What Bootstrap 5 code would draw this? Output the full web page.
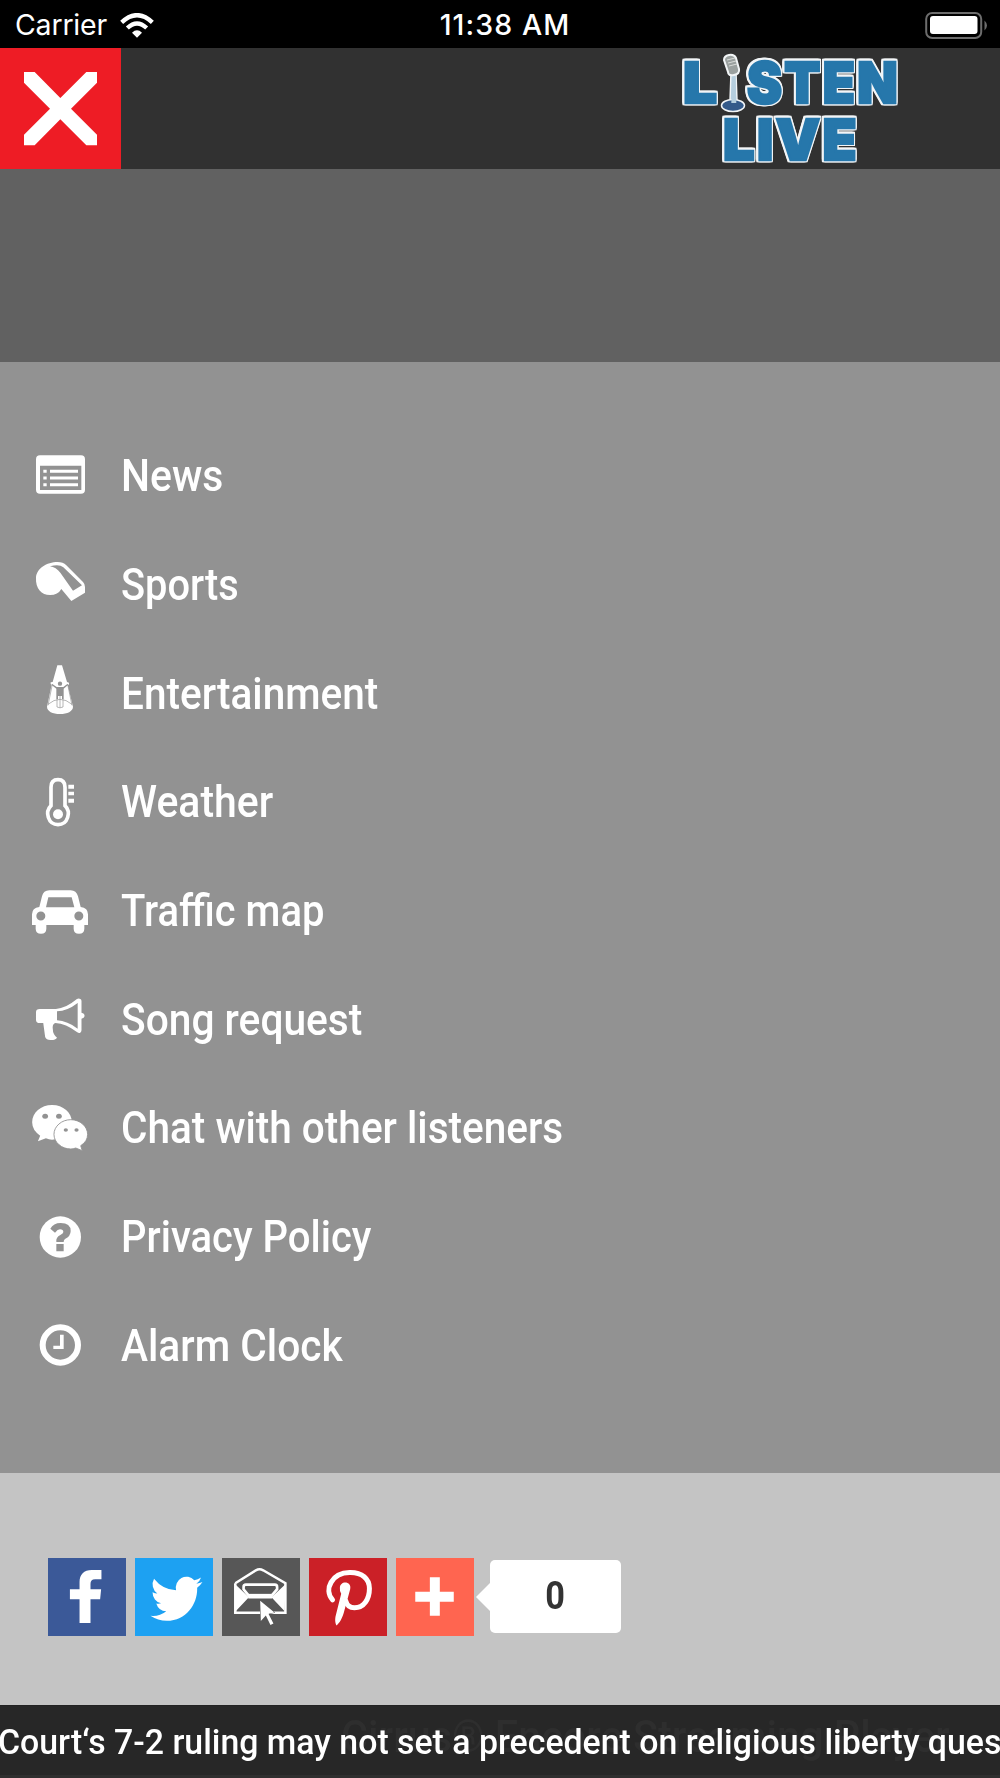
<!DOCTYPE html>
<html lang="en">
<head>
<meta charset="utf-8">
<meta name="viewport" content="width=device-width, initial-scale=1">
<title>Listen Live</title>
<link rel="stylesheet" href="https://cdn.jsdelivr.net/npm/bootstrap@5.3.0/dist/css/bootstrap.min.css">
<style>
html, body { height: 1778px; overflow: hidden; }
body { font-family: Roboto, "Liberation Sans", sans-serif; color: #fff; background: #c4c4c4; line-height: 1; }
svg { display: block; flex: none; }
.statusbar { height: 48px; background: #000; font-family: Inter, sans-serif; font-size: 28.5px; padding: 3px 13px 0 15px; display: grid; grid-template-columns: 1fr auto 1fr; }
.carrier { letter-spacing: -.2px; margin-right: -3px; }
.clock { font-weight: 500; letter-spacing: 1.1px; margin-left: 8px; }
.topbar { height: 121px; background: #313131; padding-right: 98px; }
.close-btn { width: 121px; height: 121px; background: #ee1c25; border: 0; padding: 0; }
.logo-word { filter: drop-shadow(1.3px 0 0 #f2f5f7) drop-shadow(-1.3px 0 0 #f2f5f7) drop-shadow(0 1.3px 0 #f2f5f7) drop-shadow(0 -1.3px 0 #f2f5f7); }
.band { height: 193px; background: #616161; }
.menu { height: 1111px; background: #929292; padding: 58.500px 0 74.500px 32px; }
.menu-row { height: 108.7px; color: #fff; text-decoration: none; gap: 33px; }
.menu-row svg { width: 56px; height: 56px; fill: #fff; }
.lbl { font-size: 44px; font-weight: 500; white-space: nowrap; transform-origin: 0 50%; transform: scaleX(.93); padding-top: 3px; }
.l2 { transform: scaleX(.904); }
.l3, .l7 { transform: scaleX(.921); }
.l5 { transform: scaleX(.909); }
.l6, .l9 { transform: scaleX(.925); }
.l8 { transform: scaleX(.91); }
.g { fill: #929292; }
.share { height: 232px; padding: 85px 0 0 48px; gap: 9.3px; }
.share svg { width: 77.7px; height: 77.7px; fill: #fff; }
.facebook { background: #3b5998; }
.twitter { background: #1da1f2; }
.mail { background: #575757; }
.pinterest { background: #cb2027; }
.more { background: #ff6550; }
.count { width: 131px; height: 73px; margin: 2px 0 0 7px; background: #fff; color: #333; border-radius: 5px; font-size: 39px; font-weight: 700; position: relative; }
.count span { transform: scaleX(.88); }
.count::before { content: ""; position: absolute; left: -14px; top: 22px; border: 15px solid transparent; border-right-color: #fff; border-left: 0; }
.ticker { height: 73px; background: #272727; border-top: 1px solid #222; border-bottom: 3px solid #2f2f2f; position: relative; overflow: hidden; white-space: nowrap; }
.station { position: absolute; left: 341px; top: 9px; font-size: 44px; font-weight: 500; color: #2e2e2e; transform-origin: 0 50%; transform: scaleX(.94); }
.headline { position: relative; left: -2px; padding-top: 4px; font-size: 35px; font-weight: 500; transform-origin: 0 50%; transform: scaleX(.967); }
</style>
</head>
<body>
<header>
  <div class="statusbar align-items-center">
    <div class="d-flex align-items-center gap-3">
      <span class="carrier">Carrier</span>
      <svg width="34" height="25" viewBox="362 35 102 75" fill="none" stroke="#fff"><path d="M367 63Q413 20 459 63M384 80Q413 53 442 80" stroke-width="13"/><path d="M398 94Q413 80 428 94L413 109Z" fill="#fff" stroke="none"/></svg>
    </div>
    <span class="clock">11:38 AM</span>
    <svg class="ms-auto" width="62" height="28" viewBox="925 11 62 28"><rect x="926.2" y="12" width="55" height="25" rx="6" fill="none" stroke="#6d6d6d" stroke-width="2"/><rect x="930" y="15" width="47.5" height="18" rx="3" fill="#fff"/><path d="M984.500 19.500q5 5 0 10z" fill="#6d6d6d"/></svg>
  </div>
  <div class="topbar d-flex justify-content-between">
    <button class="close-btn" type="button" aria-label="Close menu"><svg width="121" height="121" viewBox="0 144 363 363"><path fill="#fff" d="M72 216h32l77 78 78-78h32v32l-78 78 78 78v32h-32l-78-78-77 78H72v-32l78-78-78-78z"/></svg></button>
    <svg width="220" height="121" viewBox="682 48 220 121" font-family="Inter, sans-serif" font-weight="900" font-size="57" fill="#2677ab">
      <g class="logo-word" stroke="#2677ab" stroke-width="2.500">
        <text x="683" y="102.500" textLength="34" lengthAdjust="spacingAndGlyphs">L</text>
        <text x="747" y="102.500" textLength="153" letter-spacing="2.500" lengthAdjust="spacingAndGlyphs">STEN</text>
        <text x="723" y="160" textLength="136" letter-spacing="2.500" lengthAdjust="spacingAndGlyphs">LIVE</text>
      </g>
      <g stroke="#f2f5f7">
        <path d="M731 73h5l1 28q-4 4-7 0z" fill="#b5cede" stroke-width="1.500"/>
        <ellipse cx="733" cy="105.500" rx="11.500" ry="6" fill="#345a8a" stroke-width="1.500"/>
        <path d="M732 73h3.500l.8 30h-5z" fill="#b5cede" stroke="none"/>
        <path d="M724 60q0-4 5-5t7 3l3 11q1 5-5 6t-6-3z" fill="#9aa09f" stroke-width="2"/>
        <path d="M727 60l8-2M728 63l8-2M729 66l8-2" fill="none" stroke="#d9dcda" stroke-width="1"/>
      </g>
    </svg>
  </div>
</header>
<div class="band"></div>
<nav class="menu d-flex flex-column">
  <a href="#" class="menu-row d-flex align-items-center"><svg viewBox="96 49 168 168"><path fill-rule="evenodd" d="M120 74H243Q255 74 255 86V177Q255 189 243 189H120Q108 189 108 177V86Q108 74 120 74ZM120 105V178H244V105Z"/><path d="M130 117h10v9h-10zM150 117h84v9h-84zM130 137.500h10v9h-10zM150 137.500h84v9h-84zM130 158h10v9h-10zM150 158h84v9h-84z"/></svg><span class="lbl">News</span></a>
  <a href="#" class="menu-row d-flex align-items-center"><svg viewBox="96 375 168 168"><path d="M108 440C109 413 140 393 173 393Q189 393 199 403L249 453Q255 459 255 468V485L214 510L184 474Q174 492 150 492C125 492 106 472 108 440Z"/><path class="g" d="M150 406Q178 398 190 409L246 463L219 479L181 425Q168 409 150 406Z"/></svg><span class="lbl l2">Sports</span></a>
  <a href="#" class="menu-row d-flex align-items-center"><svg viewBox="96 701 168 168"><path d="M172 705H186L201 755L207 757V763H203L219 829C219 843 202 851 180 851S141 843 141 829L155 763L152 761V756L158 755Z"/><circle class="g" cx="180" cy="760" r="6.500"/><path class="g" d="M157 761L170 770H190L202 761L205 763L191 775V806H186V797H174V806H169V775L155 764Z"/><path d="M144 822Q180 792 216 822M157 762L144 825M203 762L216 825M171 806V830Q180 835 189 830V806M180 795V832" fill="none" stroke="#929292" stroke-width="2"/></svg><span class="lbl l3">Entertainment</span></a>
  <a href="#" class="menu-row d-flex align-items-center"><svg viewBox="96 97 168 168"><path d="M153 140Q153 117 174 117T195 140V195C214 214 204 252 174 252S134 214 153 195Z" fill="none" stroke="#fff" stroke-width="11"/><circle cx="174" cy="221" r="15"/><path d="M205 132h17v12h-17zM205 153h17v11h-17zM205 174h17v12h-17z"/></svg><span class="lbl">Weather</span></a>
  <a href="#" class="menu-row d-flex align-items-center"><svg viewBox="96 423 168 168"><path fill-rule="evenodd" d="M148 448H212Q229 448 234 466L242 498Q264 501 264 520V552H253V563Q253 578 237 578T221 563V552H139V563Q139 578 123 578T107 563V552H96V520Q96 501 118 498L126 466Q130 448 148 448ZM145 469L138 499H223L215 469ZM136 525A13.500 13.500 0 1 0 109 525A13.500 13.500 0 1 0 136 525ZM250 525A13.500 13.500 0 1 0 223 525A13.500 13.500 0 1 0 250 525Z"/></svg><span class="lbl l5">Traffic map</span></a>
  <a href="#" class="menu-row d-flex align-items-center"><svg viewBox="83.600 90 146.400 168" preserveAspectRatio="none"><path fill-rule="evenodd" d="M104 147H146Q172 145 201 117Q206 114 210 117Q213 119 213 123V158Q221 160 221 167T213 176V211Q213 216 209 219Q205 220 201 216Q172 191 145 189Q136 192 138 207Q138 223 149 233Q145 240 134 240Q121 241 118 231L113 189H104Q94 189 94 179V157Q94 147 104 147ZM149 154V181Q176 183 203 206V129Q176 153 149 154Z"/></svg><span class="lbl l6">Song request</span></a>
  <a href="#" class="menu-row d-flex align-items-center"><svg viewBox="83.600 416 146.400 168" preserveAspectRatio="none"><path d="M84 486C84 457 107 434 136 434S188 457 188 486S163 538 136 538Q128 538 120 534L99 543L105 526Q84 510 84 486Z"/><circle class="g" cx="118" cy="468" r="7.500"/><circle class="g" cx="154" cy="468" r="7.500"/><path d="M141 522C141 498 161 478 185 478S229 498 229 522Q229 543 211 556L215 571L198 563Q191 566 185 566C161 566 141 546 141 522Z" stroke="#929292" stroke-width="2.500"/><circle class="g" cx="172" cy="509" r="5.500"/><circle class="g" cx="200" cy="509" r="5.500"/></svg><span class="lbl l7">Chat with other listeners</span></a>
  <a href="#" class="menu-row d-flex align-items-center"><svg viewBox="96 52 168 168"><circle cx="181" cy="139" r="62"/><path class="g" d="M151 114Q160 97 182 97Q212 97 212 121Q212 137 195 145Q191 148 191 154H169Q167 140 181 133Q190 129 190 124Q190 116 180 116Q173 116 165 126ZM169 160H191V182H169Z"/></svg><span class="lbl l8">Privacy Policy</span></a>
  <a href="#" class="menu-row d-flex align-items-center"><svg viewBox="96 378 168 168"><circle cx="181" cy="465" r="53" fill="none" stroke="#fff" stroke-width="18"/><path d="M160 467H180V434H191V477H160Z"/></svg><span class="lbl l9">Alarm Clock</span></a>
</nav>
<section class="share d-flex align-items-start">
  <svg class="facebook" viewBox="54 54 234 234"><path d="M149 250V178H120V148H149V127C149 103 162 90 186 90H215V118H196C186 118 182 123 182 132V148H214L211 178H182V250Z"/></svg>
  <svg class="twitter" viewBox="315 54 234 234"><path transform="translate(361.500 90) scale(9.800 10.200)" d="M5.026 15c6.038 0 9.341-5.003 9.341-9.334 0-.14 0-.282-.006-.422A6.685 6.685 0 0 0 16 3.542a6.658 6.658 0 0 1-1.889.518 3.301 3.301 0 0 0 1.447-1.817 6.533 6.533 0 0 1-2.087.793A3.286 3.286 0 0 0 7.875 6.03a9.325 9.325 0 0 1-6.767-3.429 3.289 3.289 0 0 0 1.018 4.382A3.323 3.323 0 0 1 .64 6.575v.045a3.288 3.288 0 0 0 2.632 3.218 3.203 3.203 0 0 1-.865.115 3.230 3.230 0 0 1-.614-.057 3.283 3.283 0 0 0 3.067 2.277A6.588 6.588 0 0 1 .78 13.580a6.320 6.320 0 0 1-.78-.045A9.344 9.344 0 0 0 5.026 15z"/></svg>
  <svg class="mail" viewBox="576 54 234 234"><path d="M616 130L678 91Q689 85 700 91L767 130V219H616V130" fill="none" stroke="#fff" stroke-width="7.500"/><path d="M615 132L657 172L618 214ZM768 132L725 172L764 214Z"/><path d="M641 148V141Q641 134 648 134H735Q742 134 742 141V148L725 168H657Z" fill="#575757" stroke="#fff" stroke-width="8"/><path d="M655 162H727V176H655Z"/><path d="M691 183L734 218L716 222L731 251L722 256L708 227L693 244Z" stroke="#575757" stroke-width="3" paint-order="stroke"/></svg>
  <svg class="pinterest" viewBox="15 18 234 234"><path d="M86 144C58 112 85 63 137 62C175 61 197 80 197 110C197 143 180 168 152 168C138 168 129 160 126 148" fill="none" stroke="#fff" stroke-width="15" stroke-linecap="round"/><path d="M108 108C108 98 116 92 124 92C134 92 142 99 139 112L122 175C116 200 106 216 98 221C93 215 93 200 96 190L112 126Q107 118 108 108Z"/></svg>
  <svg class="more" viewBox="168 54 234 234"><path d="M270 112h30v44h42v30h-42v42h-30v-42h-44v-30h44z"/></svg>
  <div class="count d-flex align-items-center justify-content-center"><span>0</span></div>
</section>
<footer class="ticker d-flex align-items-center">
  <span class="station">Cirrus® Encore Streaming Player</span>
  <span class="headline">Court‘s 7-2 ruling may not set a precedent on religious liberty ques</span>
</footer>
<script src="https://cdn.jsdelivr.net/npm/bootstrap@5.3.0/dist/js/bootstrap.bundle.min.js"></script>
</body>
</html>
